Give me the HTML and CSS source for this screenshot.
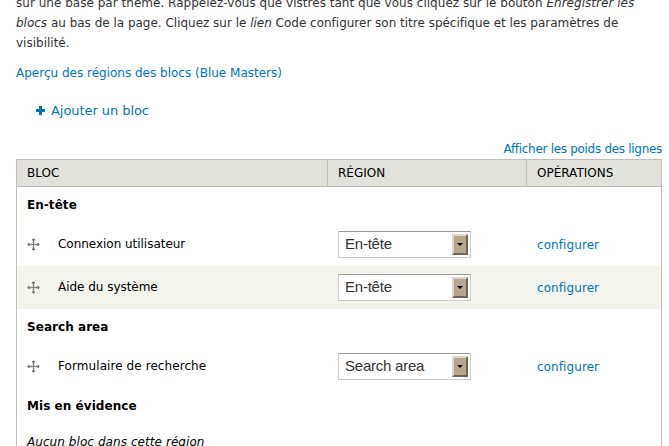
FILE: index.html
```html
<!DOCTYPE html>
<html lang="fr">
<head>
<meta charset="utf-8">
<title>Blocs</title>
<link rel="stylesheet" href="styles.css">
</head>
<body>
<svg class="symbols" aria-hidden="true">
  <symbol id="move" viewBox="0 0 13 13">
    <path fill="#777" d="M6 1h1v11H6zM1 6h11v1H1zM5 1h3v1H5zM5 11h3v1H5zM1 5h1v3H1zM11 5h1v3h-1z"/>
    <path fill="#888" d="M6 0h1v1H6zM6 12h1v1H6zM0 6h1v1H0zM12 6h1v1h-1zM5 2h3v1H5zM5 10h3v1H5zM2 5h1v3H2zM10 5h1v3h-1z" opacity=".7"/>
    <path fill="#999" d="M5 3h3v7H5zM3 5h7v3H3z" opacity=".25"/>
  </symbol>
</svg>
<main class="page">
  <p class="help"><span class="line l1">sur une base par thème. Rappelez-vous que vistres tant que vous cliquez sur le bouton <em>Enregistrer les</em></span><span class="line l2"><em>blocs</em> au bas de la page. Cliquez sur le <em>lien</em> Code configurer son titre spécifique et les paramètres de</span><span class="line">visibilité.</span></p>
  <a class="preview">Aperçu des régions des blocs (Blue Masters)</a>
  <a class="add"><svg width="9" height="9" viewBox="0 0 9 9"><path fill="#0074bd" d="M3 0h3v3h3v3H6v3H3V6H0V3h3z"/></svg><span>Ajouter un bloc</span></a>
  <a class="weights">Afficher les poids des lignes</a>
  <section class="table">
    <div class="row head"><div>BLOC</div><div>RÉGION</div><div>OPÉRATIONS</div></div>
    <div class="region">En-tête</div>
    <div class="row item"><div><svg class="handle"><use href="#move"/></svg><span class="name">Connexion utilisateur</span></div><div><span class="select"><span>En-tête</span><i class="arrow"></i></span></div><div><a class="op">configurer</a></div></div>
    <div class="row item even"><div><svg class="handle"><use href="#move"/></svg><span class="name">Aide du système</span></div><div><span class="select"><span>En-tête</span><i class="arrow"></i></span></div><div><a class="op">configurer</a></div></div>
    <div class="region">Search area</div>
    <div class="row item"><div><svg class="handle"><use href="#move"/></svg><span class="name wide">Formulaire de recherche</span></div><div><span class="select"><span>Search area</span><i class="arrow"></i></span></div><div><a class="op">configurer</a></div></div>
    <div class="region">Mis en évidence</div>
    <div class="region empty">Aucun bloc dans cette région</div>
  </section>
</main>
</body>
</html>
```
FILE: styles.css
```css
* { box-sizing: border-box; }
body { margin: 0; height: 446px; overflow: hidden; background: #fff; color: #000; font: 12px/20px "DejaVu Sans", sans-serif; }
.symbols { display: none; }
a { color: #0074bd; }
.page { display: flex; flex-direction: column; height: 446px; padding: 0 7px 0 16px; overflow: hidden; }
.help { margin: -7px 0 10px; color: #333; }
.line { display: block; white-space: nowrap; }
.l1 { letter-spacing: .022px; }
.l2 { letter-spacing: -.01px; }
.preview { height: 20px; }
.add { display: flex; align-items: center; height: 20px; margin: 18px 0 0 20px; font-size: 13px; letter-spacing: -.06px; gap: 6px; }
.add svg { margin-bottom: 1px; }
.weights { height: 20px; margin-top: 18px; text-align: right; letter-spacing: -.3px; }
.table { flex: none; border: 1px solid #bebfb9; height: 320px; }
.row { display: grid; grid-template-columns: 310px 199px 1fr; }
.row > div { display: flex; align-items: center; padding: 0 10px; }
.head { height: 27px; background: #e1e2dc; border-bottom: 1px solid #bebfb9; }
.head > div + div { border-left: 1px solid #bebfb9; }
.item { height: 43px; }
.even { background: #f3f4ee; }
.item > div + div { padding-left: 11px; }
.region { height: 36px; padding-left: 10px; line-height: 36px; font-weight: bold; letter-spacing: .05px; }
.empty { font-weight: normal; font-style: italic; letter-spacing: .07px; }
.handle { width: 13px; height: 13px; margin-right: 18px; }
.name { padding-bottom: 2px; letter-spacing: -.03px; }
.wide { letter-spacing: .08px; }
.op { letter-spacing: .08px; }
.select { display: flex; align-items: center; justify-content: space-between; width: 133px; height: 27px; padding: 0 2px 0 6px; border: 1px solid #ccc; border-top-color: #999; background: #fff; color: #333; font: 15px/25px "Liberation Sans", sans-serif; letter-spacing: -.23px; }
.select > span { padding-bottom: 2px; }
.arrow { display: flex; align-items: center; justify-content: center; width: 16px; height: 21px; border: 2px solid; border-color: #ddd8cd #706558 #706558 #ddd8cd; background: #b5a690; }
.arrow::before { content: ""; margin-bottom: 1px; border: 3px solid transparent; border-top-color: #000; border-bottom: 0; }
```
